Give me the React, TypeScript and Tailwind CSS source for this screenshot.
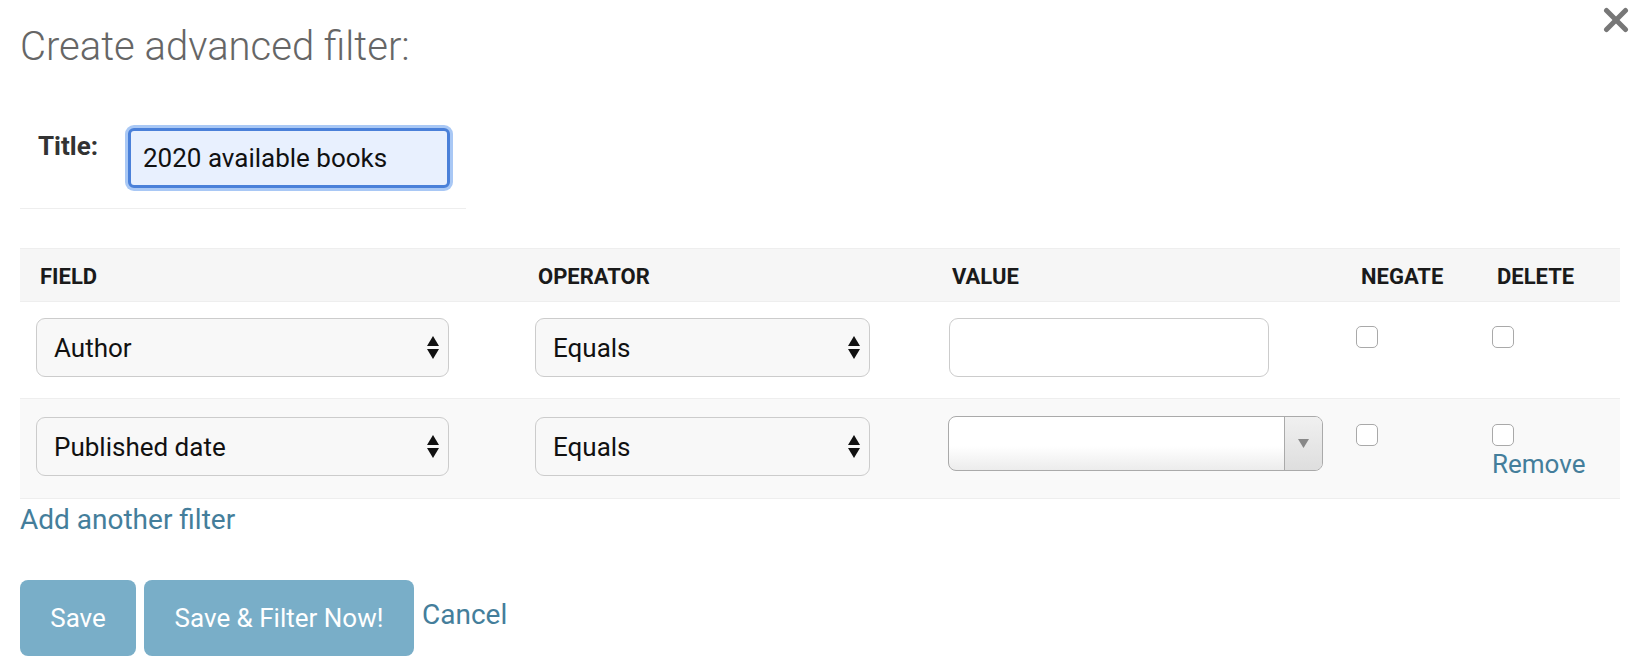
const LINK = "text-[#447e9b]";

function SelectArrows() {
    return (
        <svg width="12" height="23" viewBox="0 0 12 23" className="shrink-0">
            <polygon points="6,0 12,10 0,10" fill="#111" />
            <polygon points="0,13 12,13 6,23" fill="#111" />
        </svg>
    );
}

function FakeSelect({ label, width }: { label: string; width: string }) {
    return (
        <div
            className={`${width} h-[59px] flex items-center justify-between pl-[17px] pr-[9px] border border-[#ccc] rounded-[9px] bg-[#f8f8f8] text-[26px] leading-[30px] text-[#111]`}
        >
            <span>{label}</span>
            <SelectArrows />
        </div>
    );
}

function Checkbox() {
    return <span className="block w-[22px] h-[22px] border border-[#a9a9a9] rounded-[5px] bg-white" />;
}

function Select2Box() {
    return (
        <div className="w-[375px] h-[55px] flex border border-[#aaa] rounded-[8px] overflow-hidden bg-[linear-gradient(to_bottom,#ffffff_0%,#ffffff_55%,#ececec_100%)]">
            <div className="flex-1" />
            <div className="w-[38px] flex items-center justify-center border-l border-[#aaa] bg-[linear-gradient(to_bottom,#f0f0f0_0%,#dedede_100%)]">
                <svg width="11" height="9" viewBox="0 0 11 9">
                    <polygon points="0,0 11,0 5.5,9" fill="#888" />
                </svg>
            </div>
        </div>
    );
}

const COLS = "grid grid-cols-[499px_414px_408px_136px_143px]";

export default function App() {
    return (
        <div className="relative min-h-[670px] bg-white px-[20px] pt-[23px] font-['Roboto','Liberation_Sans',sans-serif] text-[#333]">
            <button className="absolute top-[7px] right-[13px] w-[26px] h-[26px]" aria-label="Close">
                <svg width="26" height="26" viewBox="0 0 26 26">
                    <line x1="3.5" y1="3.5" x2="22.5" y2="22.5" stroke="#777" strokeWidth="5" strokeLinecap="round" />
                    <line x1="22.5" y1="3.5" x2="3.5" y2="22.5" stroke="#777" strokeWidth="5" strokeLinecap="round" />
                </svg>
            </button>

            <h1 className="text-[40px] font-light leading-[48px] text-[#666]">Create advanced filter:</h1>

            {/* title row */}
            <div className="mt-[37px] w-[446px] flex items-start pt-[20px] pb-[20px] border-b border-[#eee]">
                <label className="ml-[18px] w-[90px] mt-[3px] text-[26px] leading-[30px] font-bold text-[#333]">
                    Title:
                </label>
                <div className="w-[322px] h-[60px] flex items-center px-[12px] border-[3px] border-[#4a80d9] rounded-[6px] bg-[#e8f0fe] shadow-[0_0_0_3px_#a9c8f5] text-[26px] leading-[30px] text-[#111]">
                    2020 available books
                </div>
            </div>

            {/* filters table */}
            <div className="mt-[39px] w-[1600px]">
                <div className={`${COLS} bg-[#f6f6f6] border-t border-b border-[#eee] pt-[15px] pb-[11px] text-[22px] leading-[26px] font-bold uppercase text-[#1a1a1a]`}>
                    <div className="pl-[20px]">Field</div>
                    <div className="pl-[19px]">Operator</div>
                    <div className="pl-[19px]">Value</div>
                    <div className="pl-[20px]">Negate</div>
                    <div className="pl-[20px]">Delete</div>
                </div>

                <div className={`${COLS} h-[97px] items-start bg-white border-b border-[#eee]`}>
                    <div className="pl-[16px] pt-[16px]">
                        <FakeSelect label="Author" width="w-[413px]" />
                    </div>
                    <div className="pl-[16px] pt-[16px]">
                        <FakeSelect label="Equals" width="w-[335px]" />
                    </div>
                    <div className="pl-[16px] pt-[16px]">
                        <div className="w-[320px] h-[59px] border border-[#ccc] rounded-[9px] bg-white" />
                    </div>
                    <div className="pl-[15px] pt-[24px]">
                        <Checkbox />
                    </div>
                    <div className="pl-[15px] pt-[24px]">
                        <Checkbox />
                    </div>
                </div>

                <div className={`${COLS} h-[100px] items-start bg-[#f9f9f9] border-b border-[#eee]`}>
                    <div className="pl-[16px] pt-[18px]">
                        <FakeSelect label="Published date" width="w-[413px]" />
                    </div>
                    <div className="pl-[16px] pt-[18px]">
                        <FakeSelect label="Equals" width="w-[335px]" />
                    </div>
                    <div className="pl-[15px] pt-[17px]">
                        <Select2Box />
                    </div>
                    <div className="pl-[15px] pt-[25px]">
                        <Checkbox />
                    </div>
                    <div className="pl-[15px] pt-[25px]">
                        <Checkbox />
                        <a className={`block mt-[3px] text-[26px] leading-[30px] ${LINK}`}>Remove</a>
                    </div>
                </div>
            </div>

            <a className={`block mt-[5px] text-[28px] leading-[32px] ${LINK}`}>Add another filter</a>

            <div className="mt-[44px] flex items-start gap-[8px]">
                <button className="w-[116px] h-[76px] rounded-[8px] bg-[#79aec8] text-white text-[26px] leading-[30px]">
                    Save
                </button>
                <button className="w-[270px] h-[76px] rounded-[8px] bg-[#79aec8] text-white text-[26px] leading-[30px]">
                    Save &amp; Filter Now!
                </button>
                <a className={`mt-[19px] text-[28px] leading-[32px] ${LINK}`}>Cancel</a>
            </div>
        </div>
    );
}
